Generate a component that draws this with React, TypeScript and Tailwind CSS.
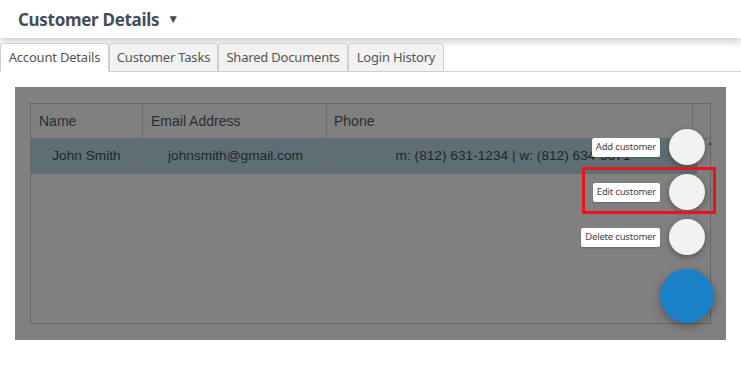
export default function App() {
	const tabs = [
		{ label: "Account Details", w: "w-[109px]", active: true },
		{ label: "Customer Tasks", w: "w-[109px]", active: false },
		{ label: "Shared Documents", w: "w-[130px]", active: false },
		{ label: "Login History", w: "w-[96px]", active: false },
	];

	const actions = [
		{ label: "Add customer" },
		{ label: "Edit customer" },
		{ label: "Delete customer" },
	];

	return (
		<div className="relative h-[380px] w-[741px] overflow-hidden bg-white font-['Noto_Sans',sans-serif]">
			{/* Title bar */}
			<header className="relative z-0 flex h-[38px] items-center bg-white pl-[18px] shadow-[0_3px_8px_rgba(0,0,0,0.22)]">
				<h1 className="text-[17px] font-bold leading-none tracking-[-0.3px] text-[#464c59]">
					Customer Details
				</h1>
				<span className="ml-[8px] text-[12px] leading-none text-[#464c59]">▼</span>
			</header>

			{/* Tabs */}
			<nav className="relative z-10 mt-[5px] flex h-[29px] border-b border-[#cfcfcf]">
				{tabs.map((t) => (
					<div
						key={t.label}
						className={`${t.w} -mb-px flex items-center justify-center rounded-t-[3px] border border-[#cfcfcf] text-[13px] tracking-[-0.2px] text-[#555] ${
							t.active ? "border-b-white bg-white" : "bg-[#f2f2f2]"
						}`}>
						{t.label}
					</div>
				))}
			</nav>

			{/* Dimmed content */}
			<section className="mx-[15px] mt-[15px] h-[253px] bg-[#808080] px-[15px] pb-[16px] pt-[16px] font-['Liberation_Sans',sans-serif]">
				<div className="flex h-full flex-col border border-[#666]">
					<div className="flex h-[35px] border-b border-[#6a6a6a] text-[14px] text-[#2a2d30]">
						<div className="flex w-[112px] items-center border-r border-[#6a6a6a] pl-[8px]">
							Name
						</div>
						<div className="flex w-[184px] items-center border-r border-[#6a6a6a] pl-[8px]">
							Email Address
						</div>
						<div className="flex w-[366px] items-center border-r border-[#6a6a6a] pl-[7px]">
							Phone
						</div>
						<div className="flex-1" />
					</div>
					<div className="flex flex-1">
						<div className="flex w-[666px] flex-col">
							<div className="flex h-[35px] bg-[#5f6e75] text-[13.7px] text-[#1e2629]">
								<div className="flex w-[112px] items-center justify-center border-r border-[#6a6a6a]">
									John Smith
								</div>
								<div className="flex w-[186px] items-center justify-center border-r border-[#6a6a6a]">
									johnsmith@gmail.com
								</div>
								<div className="flex flex-1 items-center justify-center">
									m: (812) 631-1234 | w: (812) 634-5671
								</div>
							</div>
						</div>
						<div className="relative flex-1 border-l border-[#777]">
							<span className="absolute left-[9px] top-[0px] text-[6px] text-[#444]">▲</span>
							<svg
								className="absolute bottom-[6px] right-[5px]"
								width="8"
								height="8"
								viewBox="0 0 8 8">
								<path d="M1 7 L7 1 M4 7 L7 4" stroke="#444" strokeWidth="1" />
							</svg>
						</div>
					</div>
				</div>
			</section>

			{/* Speed dial */}
			<div className="absolute right-[27px] top-[129px] z-20 flex flex-col items-end gap-[9px] font-['Noto_Sans',sans-serif]">
				{actions.map((a) => (
					<div key={a.label} className="mr-[9px] flex items-center gap-[9px]">
						<span className="flex h-[19px] items-center rounded-[2px] bg-white px-[4px] text-[9.5px] tracking-[-0.2px] text-[#444] shadow-[0_1px_2px_rgba(0,0,0,0.2)]">
							{a.label}
						</span>
						<div className="h-[36px] w-[36px] rounded-full bg-[#f2f2f2] shadow-[0_2px_6px_rgba(0,0,0,0.35)]" />
					</div>
				))}
				<div className="mt-[5px] h-[54px] w-[54px] rounded-full bg-[#1b82c8] shadow-[0_3px_10px_rgba(0,0,0,0.35)]" />
			</div>

			{/* Highlight */}
			<div className="absolute left-[582px] top-[167px] z-30 h-[47px] w-[134px] border-[3px] border-[#e8161c]" />
		</div>
	);
}
